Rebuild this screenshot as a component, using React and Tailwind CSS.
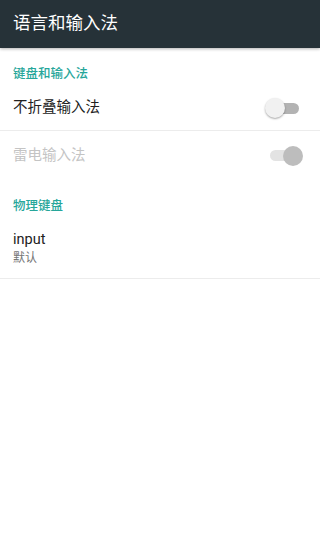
export default function App() {
  return (
    <div
      className="w-[320px] h-[550px] bg-white overflow-hidden"
      style={{ fontFamily: 'Roboto, "Noto Sans CJK SC", sans-serif' }}
    >
      {/* Toolbar */}
      <div className="h-[48px] bg-[#263238] flex items-center px-[13px] shadow-[0_1px_3px_rgba(0,0,0,0.3)]">
        <h1 className="text-[17.5px] text-white leading-none">语言和输入法</h1>
      </div>

      {/* Keyboard & input methods */}
      <div className="pt-[16px]">
        <p className="px-[13px] text-[12.5px] leading-[20px] text-[#26a69a] font-medium">键盘和输入法</p>
      </div>

      <div className="h-[47px] pt-[2px] flex items-center justify-between pl-[13px] pr-[21px] border-b border-[#ececec]">
        <span className="text-[14.5px] text-[#212121]">不折叠输入法</span>
        <div className="relative w-[34px] h-[20px] flex items-center">
          <div className="ml-[3px] w-[31px] h-[11px] rounded-full bg-[#b3b3b3]" />
          <div className="absolute left-0 top-0 w-[20px] h-[20px] rounded-full bg-[#f1f1f1] shadow-[0_1px_2px_rgba(0,0,0,0.35)]" />
        </div>
      </div>

      <div className="h-[49px] flex items-center justify-between pl-[13px] pr-[17px]">
        <span className="text-[14.5px] text-[#c4c4c4]">雷电输入法</span>
        <div className="relative w-[33px] h-[20px] flex items-center">
          <div className="w-[30px] h-[11px] rounded-full bg-[#e3e3e3]" />
          <div className="absolute right-0 top-0 w-[20px] h-[20px] rounded-full bg-[#bdbdbd]" />
        </div>
      </div>

      {/* Physical keyboard */}
      <div className="pt-[16px]">
        <p className="px-[13px] text-[12.5px] leading-[20px] text-[#26a69a] font-medium">物理键盘</p>
      </div>

      <div className="pt-[14px] pb-[12px] px-[13px] border-b border-[#ececec]">
        <p className="text-[14.5px] leading-[20px] text-[#212121]">input</p>
        <p className="text-[12px] leading-[16px] text-[#757575]">默认</p>
      </div>
    </div>
  );
}
